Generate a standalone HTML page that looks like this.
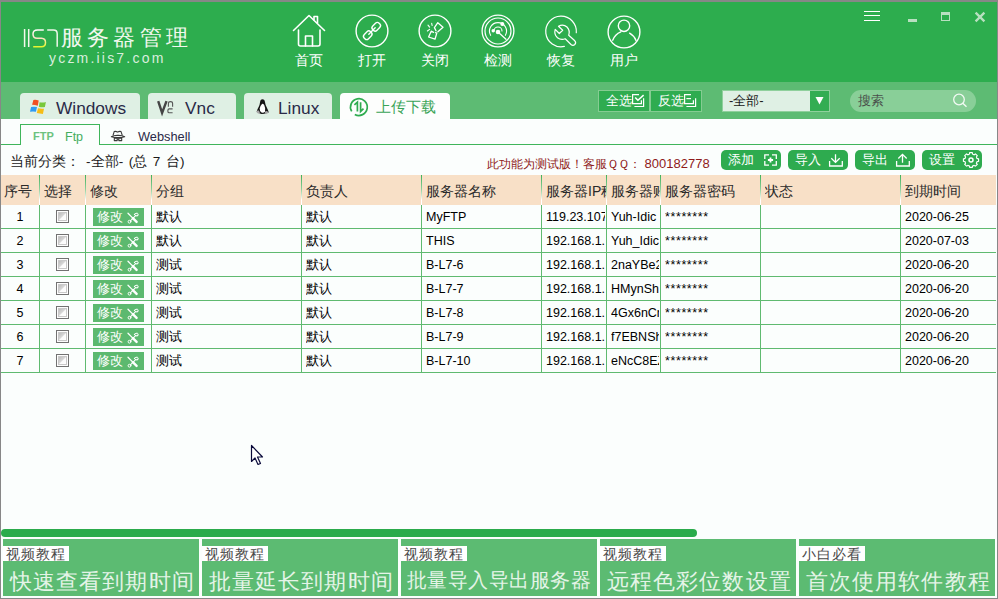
<!DOCTYPE html>
<html><head><meta charset="utf-8">
<style>
*{box-sizing:border-box;margin:0;padding:0}
html,body{width:998px;height:599px;overflow:hidden;background:#fbfefd}
body{position:relative;font-family:"Liberation Sans",sans-serif;color:#222}
.a{position:absolute}
.bd{background:#878787}
#hdr{left:1px;top:2px;width:996px;height:80px;background:#2dad4e}
#band{left:1px;top:82px;width:996px;height:37px;background:#5dbb73}
.nav{position:absolute;top:52px;width:40px;text-align:center;color:#fff;font-size:14px;line-height:16px}
.tab{position:absolute;top:93px;height:26px;background:#dff0e4;border-radius:4px 4px 0 0}
.tab span{position:absolute;top:4px;font-size:17.3px;line-height:22px;color:#2a2a48}
.tb{position:absolute;top:90px;height:22px;border:1px solid #85cc92;background:#2fac50;color:#fff;font-size:13px;line-height:20px}
.btn{position:absolute;top:150px;width:60px;height:20px;border-radius:5px;background:#2eab4f;color:#fff;font-size:13px;line-height:20px}
.btn span{position:absolute;left:7px;top:0}
.btn svg{position:absolute;left:43px;top:4px}
#thead{left:1px;top:175px;width:995px;height:30px;background:#f8e0c7}
.vl{position:absolute;top:175px;width:1px;height:197px;background:linear-gradient(#3fb05a 0px,#8ccf9a 14px,#ffffff 25px,#ffffff 30px,#5fba70 30px)}
.hl{position:absolute;left:1px;width:995px;height:1px;background:#5fba70}
.th{position:absolute;top:183px;font-size:14px;line-height:16px;color:#2a2a2a;white-space:nowrap;overflow:hidden}
.td{position:absolute;font-size:12.5px;line-height:16px;color:#000;white-space:nowrap;overflow:hidden}
.cb{position:absolute;left:56px;width:13px;height:13px;border:1px solid #727272;background:#fdfdfd}
.cb i{position:absolute;left:1px;top:1px;width:9px;height:9px;border:1px solid #c9c9c9;background:linear-gradient(135deg,#bdbdbd 0%,#d8d8d8 48%,#fafafa 52%,#fff 100%)}
.mb{position:absolute;left:93px;width:51px;height:18px;background:#5cb96f;color:#fff;font-size:13px;line-height:18px}
.mb span{position:absolute;left:4px;top:0}
.mb svg{position:absolute;left:34px;top:4px}
.pn{position:absolute;top:539px;width:196px;height:57px;background:#5cbb72}
.pn .lb{position:absolute;left:0;top:7px;width:66px;height:15px;background:#fff;color:#4a4a4a;font-size:14px;line-height:16px;padding-left:3px;letter-spacing:1px;white-space:nowrap}
.pn .bt{position:absolute;left:7px;top:30px;color:#e4f4e7;font-size:22px;line-height:26px;letter-spacing:1.1px;white-space:nowrap}
</style></head>
<body>
<!-- borders -->
<div class="a bd" style="left:0;top:0;width:998px;height:2px"></div>
<div class="a bd" style="left:0;top:0;width:1px;height:599px"></div>
<div class="a bd" style="left:997px;top:0;width:1px;height:599px"></div>
<div class="a bd" style="left:0;top:598px;width:998px;height:1px"></div>

<div id="hdr" class="a"></div>
<div id="band" class="a"></div>

<!-- logo -->
<svg class="a" style="left:0;top:0" width="200" height="82" viewBox="0 0 200 82">
 <defs><linearGradient id="sg" x1="0" y1="29" x2="0" y2="48" gradientUnits="userSpaceOnUse">
  <stop offset="0" stop-color="#ffffff"/><stop offset="0.45" stop-color="#fde3cf"/><stop offset="0.7" stop-color="#f2f27a"/><stop offset="1" stop-color="#e4f51c"/></linearGradient></defs>
 <g fill="none" stroke-width="1.5" stroke-linecap="butt">
  <path d="M24.6 29V47M28.7 29V47" stroke="#f4f8ec"/>
  <path d="M43.8 30H37.5Q33 30 33 34Q33 38.3 37 38.3H41.5Q45.5 38.5 45.5 42.5Q45.5 46.8 41.5 46.8H33.2" stroke="url(#sg)"/>
  <path d="M47.2 30H53.5Q57.2 30 57.2 33.7V46.8" stroke="#eef6ea"/>
 </g>
</svg>
<div class="a" style="left:61px;top:24px;font-size:22px;line-height:28px;letter-spacing:4.2px;color:#f2f8ee;font-weight:300;white-space:nowrap">服务器管理</div>
<div class="a" style="left:49px;top:49px;font-size:14px;line-height:18px;letter-spacing:2.2px;color:#d9eedd;white-space:nowrap">yczm.iis7.com</div>

<!-- nav icons -->
<svg class="a" style="left:0;top:0" width="700" height="82" viewBox="0 0 700 82">
 <g fill="none" stroke="#fff" stroke-width="1.6" stroke-linejoin="round" stroke-linecap="round">
  <!-- house -->
  <path d="M293.5 30.5L309 15.5L324.5 30.5"/>
  <path d="M314 20V16.5H317.5V23"/>
  <path d="M298.5 30V44Q298.5 46 300.5 46H318Q320 46 320 44V30"/>
  <path d="M305.5 46V36H312.5V46"/>
  <!-- open link -->
  <circle cx="372" cy="31" r="15.9" stroke-width="1.4"/>
  <g transform="rotate(-45 372 31)">
   <rect x="361.5" y="28" width="9" height="6" rx="2.6" stroke-width="1.4"/>
   <rect x="373.5" y="28" width="9" height="6" rx="2.6" stroke-width="1.4"/>
   <path d="M367.5 31H376.5" stroke-width="1.4"/>
  </g>
  <!-- close -->
  <circle cx="435" cy="31" r="15.9" stroke-width="1.4"/>
  <path d="M436 30.8L434.4 27.6L437.8 22.7L443 27.2L437.9 31.7" stroke-width="1.3"/>
  <path d="M433.6 32.3L431.2 31.2L428.6 37L435 39.2L436.8 33.1L435.6 32.7" stroke-width="1.3"/>
  <path d="M428 25.2L429.6 27.1M431.7 23.4L432.1 25.5M427.4 31L429.6 29.4" stroke-width="1.1"/>
  <!-- radar -->
  <circle cx="498" cy="31" r="15.9" stroke-width="1.3"/>
  <circle cx="498" cy="31" r="13" stroke-width="1.2"/>
  <path d="M490.6 35.3A8.5 8.5 0 1 1 505.4 35.3" stroke-width="1.1"/>
  <path d="M494 31A4 4 0 0 1 502 31" stroke-width="1.1"/>
  <path d="M498 32L506 39.2" stroke-width="1.3"/>
  <circle cx="498" cy="32" r="1.5" fill="#fff"/>
  <circle cx="502.3" cy="24" r="1.2" fill="#fff"/>
  <circle cx="493.2" cy="30.8" r="0.9" fill="#fff"/>
  <!-- wrench -->
  <path d="M576.3 32.7A15.3 15.3 0 1 0 564.4 46.4" stroke-width="1.2"/>
  <path d="M558.5 26.2L562.7 30.3L559.3 33.5L555.2 29.4Q553.8 34.5 557.5 37.8Q561 40.5 565.2 38.8L571 44.5Q573 46.2 574.8 44.5Q576.5 42.6 574.8 40.8L568.7 35.2Q570.3 30.5 567 27Q563.2 23.5 558.5 26.2Z" stroke-width="1.2"/>
  <!-- user -->
  <circle cx="624" cy="32" r="15.9" stroke-width="1.4"/>
  <circle cx="624" cy="25.8" r="5.7" stroke-width="1.4"/>
  <path d="M612.7 40.2A14.7 14.7 0 0 1 620.8 31.8M629.6 33.2A14.7 14.7 0 0 1 636 40.4" stroke-width="1.4"/>
 </g>
</svg>
<div class="nav" style="left:289px">首页</div>
<div class="nav" style="left:352px">打开</div>
<div class="nav" style="left:415px">关闭</div>
<div class="nav" style="left:478px">检测</div>
<div class="nav" style="left:541px">恢复</div>
<div class="nav" style="left:604px">用户</div>

<!-- window controls -->
<div class="a" style="left:864px;top:10.5px;width:16px;height:1.5px;background:#fff"></div>
<div class="a" style="left:864px;top:14.5px;width:16px;height:1.5px;background:#fff"></div>
<div class="a" style="left:864px;top:19.5px;width:16px;height:1.5px;background:#fff"></div>
<div class="a" style="left:908px;top:19px;width:9px;height:3px;background:#b8e0c0"></div>
<div class="a" style="left:941px;top:12px;width:9px;height:9px;border:1px solid #b8e0c0;border-top-width:3px"></div>
<svg class="a" style="left:974px;top:11px" width="12" height="12" viewBox="0 0 12 12"><path d="M1.6 1.6L10.4 10.4M10.4 1.6L1.6 10.4" stroke="#b8e0c0" stroke-width="2.3"/></svg>

<!-- tabs -->
<div class="tab" style="left:20px;width:120px"><span style="left:36px">Windows</span></div>
<div class="tab" style="left:148px;width:88px"><span style="left:37px">Vnc</span></div>
<div class="tab" style="left:244px;width:88px"><span style="left:34px">Linux</span></div>
<div class="tab" style="left:340px;width:110px;background:#fdfefd"><span style="left:36px;top:3px;font-size:15px;color:#3aa457">上传下载</span></div>
<svg class="a" style="left:0;top:90px" width="400" height="30" viewBox="0 90 400 30">
 <path d="M33.4 100Q36 99.5 38.7 100.6L37.8 105.7Q35 104.8 32.1 104.8Z" fill="#f04f23"/>
 <path d="M39.6 102.3Q42.8 103 45.9 102.1L44.9 107Q41.8 107.6 38.9 106.7Z" fill="#78c83a"/>
 <path d="M31.1 107Q34 106.6 37 107L35.9 111.8Q33 111.4 30 111.8Z" fill="#2f9bf2"/>
 <path d="M38 108.3Q41 109 44 108.7L42.9 114Q40 113.8 36.8 113.1Z" fill="#f6bd16"/>
 <path d="M158.2 101.2L162.1 113L166.5 101.2" fill="none" stroke="#454545" stroke-width="2.4"/>
 <path d="M168.4 106.8V103.5Q168.4 101.6 170.5 101.6Q172.6 101.6 172.6 103.5V106.8" fill="none" stroke="#555" stroke-width="1.1"/>
 <path d="M172.6 108.9H169.2Q167.9 108.9 167.9 110.2V111.5Q167.9 112.8 169.2 112.8H172.6" fill="none" stroke="#555" stroke-width="1.1"/>
 <path d="M262.5 99.2Q260.2 99.3 260 102.5Q259.8 105 258.5 107.2Q257.2 109.3 256.8 111.4Q259 113.8 261.5 114Q264.5 114 268.8 112.4Q268 110 266.8 107.5Q265.2 104.5 265 102.3Q264.7 99.2 262.5 99.2Z" fill="#151515"/>
 <path d="M262.2 103.8Q260.4 105.5 259.7 108.6Q259.5 111.5 261.5 112.6Q264 113.2 265 111.2Q265.8 108.2 264.3 105.2Q263.5 103.8 262.2 103.8Z" fill="#fff"/>
 <path d="M256 111.4Q257.5 110 259 110.6L260.2 113.7Q257.8 114.3 256 111.4Z M268.9 112.5Q267.5 110.5 265.6 111L264.5 113.6Q267 114.2 268.9 112.5Z" fill="#a9a9a9"/>
 <path d="M354.8 114.4A8.4 8.4 0 1 0 351.7 111.4" fill="none" stroke="#2fac50" stroke-width="1.7"/>
 <path d="M354.4 104.8L357.4 102.2V111.4M360.6 102.2V111.4L363.5 108.6" fill="none" stroke="#2fac50" stroke-width="1.7"/>
</svg>

<!-- toolbar -->
<div class="tb" style="left:598px;width:52px"><span class="a" style="left:7px;top:0">全选</span></div>
<div class="tb" style="left:650px;width:52px"><span class="a" style="left:7px;top:0">反选</span></div>
<svg class="a" style="left:0;top:0" width="710" height="115" viewBox="0 0 710 115"><g fill="none" stroke="#fff" stroke-width="1.2">
 <path d="M639 94.6H632.6V103.6H641.4V100.2"/><path d="M635.2 97.4L637.9 100.3L643.6 95.1" stroke-width="1.5"/><path d="M634.4 106.5H643.6V98.2"/>
 <path d="M691 94.6H684.6V103.6H693.4V100.2"/><path d="M686.4 98.6H691"/><path d="M686.4 106.5H695.6V98.2"/>
</g></svg>
<div class="a" style="left:722px;top:90px;width:108px;height:22px;background:#dff0e4;border:1px solid #8fd09c"></div>
<div class="a" style="left:729px;top:93px;font-size:13px;line-height:16px;color:#1a1a1a">-全部-</div>
<div class="a" style="left:810px;top:91px;width:19px;height:20px;background:#33ad52"></div>
<svg class="a" style="left:815px;top:96px" width="9" height="9" viewBox="0 0 9 9"><path d="M0.5 1H8.5L4.5 8.5Z" fill="#fff"/></svg>
<div class="a" style="left:850px;top:90px;width:126px;height:22px;border-radius:11px;background:#89cf98"></div>
<div class="a" style="left:858px;top:93px;font-size:13px;line-height:16px;color:#4a4f4b">搜索</div>
<svg class="a" style="left:952px;top:93px" width="16" height="15" viewBox="0 0 16 15"><circle cx="7" cy="6.5" r="5.3" fill="none" stroke="#f2faf3" stroke-width="1.3"/><path d="M10.8 10.3L14.5 13.8" stroke="#f2faf3" stroke-width="1.4"/></svg>

<!-- subtabs -->
<div class="a" style="left:1px;top:144px;width:996px;height:1px;background:#3fb55b"></div>
<div class="a" style="left:20px;top:124px;width:80px;height:21px;border:1px solid #3fb55b;border-bottom:none;background:#fbfefd"></div>
<div class="a" style="left:33px;top:129px;font-size:11px;line-height:14px;font-weight:bold;color:#6cc27f">FTP</div>
<div class="a" style="left:65px;top:130px;font-size:12.5px;line-height:14px;color:#45ad5e">Ftp</div>
<svg class="a" style="left:105px;top:124px" width="30" height="20" viewBox="105 124 30 20"><g fill="none" stroke="#3a3a3a" stroke-width="1.1" stroke-linejoin="round">
 <path d="M113 135.4L114.2 131.6Q115.8 130.9 117.6 132.1Q119.4 130.9 121 131.6L122.3 135.4"/>
 <path d="M111.4 136.8Q113.5 135.2 118 135.3Q122.5 135.2 124.6 136.8Q122 137.7 118 137.7Q114 137.7 111.4 136.8Z" stroke-width="1.2"/>
 <path d="M114.3 138.2H117.2V140.6H114.3ZM118.8 138.2H121.7V140.6H118.8ZM117.2 139H118.8" stroke-width="1.1"/>
</g></svg>
<div class="a" style="left:138px;top:130px;font-size:12.8px;line-height:14px;color:#2a2a48">Webshell</div>

<!-- info row -->
<div class="a" style="left:10px;top:154px;font-size:13.6px;line-height:16px;color:#1a1a1a;white-space:nowrap;letter-spacing:0.1px;word-spacing:1.5px">当前分类：&nbsp;-全部- (总 7 台)</div>
<div class="a" style="left:487px;top:156px;font-size:13px;line-height:16px;color:#8f1a1a;white-space:nowrap"><span style="font-size:12.2px">此功能为测试版！客服ＱＱ：</span> 800182778</div>
<div class="btn" style="left:721px"><span>添加</span></div>
<div class="btn" style="left:788px"><span>导入</span></div>
<div class="btn" style="left:855px"><span>导出</span></div>
<div class="btn" style="left:922px"><span>设置</span></div>
<svg class="a" style="left:700px;top:145px" width="298" height="30" viewBox="700 145 298 30"><g fill="none" stroke="#fff" stroke-width="1.3">
 <path d="M769 154.8H764.8V159M764.8 161V165.1H769M772 154.8H776.3V159M776.3 161V165.1H772"/>
 <path d="M770.5 157.4V162.6M767.9 160H773.1" stroke-width="1.8"/>
 <path d="M829.6 161V166H842.3V161"/><path d="M835.5 154.2V162.2M831.3 158.3L835.5 162.4L839.7 158.3"/>
 <path d="M896.6 161V166H909.3V161"/><path d="M902.5 155V162.7M898.3 158.5L902.5 154.4L906.7 158.5"/>
 <path d="M969.6 153.2H972.4L972.9 155L974.5 155.7L976.1 154.7L978.1 156.6L977.2 158.3L977.8 159.8L979.6 160.3V163L977.8 163.5L977.1 165.1L978.1 166.7L976.1 168.6L974.4 167.7L972.9 168.3L972.4 170H969.6L969.1 168.3L967.5 167.7L965.9 168.6L963.9 166.7L964.8 165.1L964.2 163.5L962.4 163V160.3L964.2 159.8L964.8 158.3L963.9 156.6L965.9 154.7L967.5 155.7L969.1 155Z" transform="translate(971 160) scale(0.88) translate(-971 -161.6)" stroke-width="1.3"/>
 <circle cx="971" cy="160" r="2" stroke-width="1.5"/>
</g></svg>

<!-- table -->
<div id="thead" class="a"></div>
<div class="th" style="left:4px;width:35px">序号</div>
<div class="th" style="left:44px;width:41px">选择</div>
<div class="th" style="left:90px;width:60px">修改</div>
<div class="th" style="left:156px;width:145px">分组</div>
<div class="th" style="left:306px;width:115px">负责人</div>
<div class="th" style="left:426px;width:115px">服务器名称</div>
<div class="th" style="left:546px;width:60px">服务器IP称</div>
<div class="th" style="left:611px;width:49px">服务器账号</div>
<div class="th" style="left:665px;width:95px">服务器密码</div>
<div class="th" style="left:765px;width:135px">状态</div>
<div class="th" style="left:905px;width:91px">到期时间</div>
<div class="vl" style="left:39px"></div>
<div class="vl" style="left:85px"></div>
<div class="vl" style="left:151px"></div>
<div class="vl" style="left:301px"></div>
<div class="vl" style="left:421px"></div>
<div class="vl" style="left:541px"></div>
<div class="vl" style="left:606px"></div>
<div class="vl" style="left:660px"></div>
<div class="vl" style="left:760px"></div>
<div class="vl" style="left:900px"></div>
<div class="hl" style="top:228px"></div>
<div class="td" style="left:1px;width:38px;top:209px;text-align:center">1</div>
<div class="cb" style="top:210px"><i></i></div>
<div class="mb" style="top:208px"><span>修改</span><svg width="14" height="14" viewBox="0 0 14 14"><g fill="none" stroke="#fff" stroke-linecap="round"><path d="M1 1.3L4.8 5.1" stroke-width="1.3"/><path d="M5.8 6.1L9.6 9.9" stroke-width="2.4"/><path d="M8.6 3.6L3.4 8.8" stroke-width="1.1"/><circle cx="2.5" cy="9.7" r="1.4" stroke-width="1"/><path d="M7.4 2.6Q8.4 0.9 10.3 1.4M8.6 3.6Q10.8 4.6 11.1 2.4" stroke-width="1.1"/></g></svg></div>
<div class="td" style="left:156px;width:140px;top:209px">默认</div>
<div class="td" style="left:306px;width:110px;top:209px">默认</div>
<div class="td" style="left:426px;width:110px;top:209px">MyFTP</div>
<div class="td" style="left:546px;width:59px;top:209px">119.23.107.1</div>
<div class="td" style="left:611px;width:48px;top:209px">Yuh-Idic</div>
<div class="td" style="left:665px;width:90px;top:209px;letter-spacing:0.6px">********</div>
<div class="td" style="left:905px;width:90px;top:209px">2020-06-25</div>
<div class="hl" style="top:252px"></div>
<div class="td" style="left:1px;width:38px;top:233px;text-align:center">2</div>
<div class="cb" style="top:234px"><i></i></div>
<div class="mb" style="top:232px"><span>修改</span><svg width="14" height="14" viewBox="0 0 14 14"><g fill="none" stroke="#fff" stroke-linecap="round"><path d="M1 1.3L4.8 5.1" stroke-width="1.3"/><path d="M5.8 6.1L9.6 9.9" stroke-width="2.4"/><path d="M8.6 3.6L3.4 8.8" stroke-width="1.1"/><circle cx="2.5" cy="9.7" r="1.4" stroke-width="1"/><path d="M7.4 2.6Q8.4 0.9 10.3 1.4M8.6 3.6Q10.8 4.6 11.1 2.4" stroke-width="1.1"/></g></svg></div>
<div class="td" style="left:156px;width:140px;top:233px">默认</div>
<div class="td" style="left:306px;width:110px;top:233px">默认</div>
<div class="td" style="left:426px;width:110px;top:233px">THIS</div>
<div class="td" style="left:546px;width:59px;top:233px">192.168.1.1</div>
<div class="td" style="left:611px;width:48px;top:233px">Yuh_Idic</div>
<div class="td" style="left:665px;width:90px;top:233px;letter-spacing:0.6px">********</div>
<div class="td" style="left:905px;width:90px;top:233px">2020-07-03</div>
<div class="hl" style="top:276px"></div>
<div class="td" style="left:1px;width:38px;top:257px;text-align:center">3</div>
<div class="cb" style="top:258px"><i></i></div>
<div class="mb" style="top:256px"><span>修改</span><svg width="14" height="14" viewBox="0 0 14 14"><g fill="none" stroke="#fff" stroke-linecap="round"><path d="M1 1.3L4.8 5.1" stroke-width="1.3"/><path d="M5.8 6.1L9.6 9.9" stroke-width="2.4"/><path d="M8.6 3.6L3.4 8.8" stroke-width="1.1"/><circle cx="2.5" cy="9.7" r="1.4" stroke-width="1"/><path d="M7.4 2.6Q8.4 0.9 10.3 1.4M8.6 3.6Q10.8 4.6 11.1 2.4" stroke-width="1.1"/></g></svg></div>
<div class="td" style="left:156px;width:140px;top:257px">测试</div>
<div class="td" style="left:306px;width:110px;top:257px">默认</div>
<div class="td" style="left:426px;width:110px;top:257px">B-L7-6</div>
<div class="td" style="left:546px;width:59px;top:257px">192.168.1.6</div>
<div class="td" style="left:611px;width:48px;top:257px">2naYBe2x</div>
<div class="td" style="left:665px;width:90px;top:257px;letter-spacing:0.6px">********</div>
<div class="td" style="left:905px;width:90px;top:257px">2020-06-20</div>
<div class="hl" style="top:300px"></div>
<div class="td" style="left:1px;width:38px;top:281px;text-align:center">4</div>
<div class="cb" style="top:282px"><i></i></div>
<div class="mb" style="top:280px"><span>修改</span><svg width="14" height="14" viewBox="0 0 14 14"><g fill="none" stroke="#fff" stroke-linecap="round"><path d="M1 1.3L4.8 5.1" stroke-width="1.3"/><path d="M5.8 6.1L9.6 9.9" stroke-width="2.4"/><path d="M8.6 3.6L3.4 8.8" stroke-width="1.1"/><circle cx="2.5" cy="9.7" r="1.4" stroke-width="1"/><path d="M7.4 2.6Q8.4 0.9 10.3 1.4M8.6 3.6Q10.8 4.6 11.1 2.4" stroke-width="1.1"/></g></svg></div>
<div class="td" style="left:156px;width:140px;top:281px">测试</div>
<div class="td" style="left:306px;width:110px;top:281px">默认</div>
<div class="td" style="left:426px;width:110px;top:281px">B-L7-7</div>
<div class="td" style="left:546px;width:59px;top:281px">192.168.1.7</div>
<div class="td" style="left:611px;width:48px;top:281px">HMynShx</div>
<div class="td" style="left:665px;width:90px;top:281px;letter-spacing:0.6px">********</div>
<div class="td" style="left:905px;width:90px;top:281px">2020-06-20</div>
<div class="hl" style="top:324px"></div>
<div class="td" style="left:1px;width:38px;top:305px;text-align:center">5</div>
<div class="cb" style="top:306px"><i></i></div>
<div class="mb" style="top:304px"><span>修改</span><svg width="14" height="14" viewBox="0 0 14 14"><g fill="none" stroke="#fff" stroke-linecap="round"><path d="M1 1.3L4.8 5.1" stroke-width="1.3"/><path d="M5.8 6.1L9.6 9.9" stroke-width="2.4"/><path d="M8.6 3.6L3.4 8.8" stroke-width="1.1"/><circle cx="2.5" cy="9.7" r="1.4" stroke-width="1"/><path d="M7.4 2.6Q8.4 0.9 10.3 1.4M8.6 3.6Q10.8 4.6 11.1 2.4" stroke-width="1.1"/></g></svg></div>
<div class="td" style="left:156px;width:140px;top:305px">测试</div>
<div class="td" style="left:306px;width:110px;top:305px">默认</div>
<div class="td" style="left:426px;width:110px;top:305px">B-L7-8</div>
<div class="td" style="left:546px;width:59px;top:305px">192.168.1.8</div>
<div class="td" style="left:611px;width:48px;top:305px">4Gx6nCrx</div>
<div class="td" style="left:665px;width:90px;top:305px;letter-spacing:0.6px">********</div>
<div class="td" style="left:905px;width:90px;top:305px">2020-06-20</div>
<div class="hl" style="top:348px"></div>
<div class="td" style="left:1px;width:38px;top:329px;text-align:center">6</div>
<div class="cb" style="top:330px"><i></i></div>
<div class="mb" style="top:328px"><span>修改</span><svg width="14" height="14" viewBox="0 0 14 14"><g fill="none" stroke="#fff" stroke-linecap="round"><path d="M1 1.3L4.8 5.1" stroke-width="1.3"/><path d="M5.8 6.1L9.6 9.9" stroke-width="2.4"/><path d="M8.6 3.6L3.4 8.8" stroke-width="1.1"/><circle cx="2.5" cy="9.7" r="1.4" stroke-width="1"/><path d="M7.4 2.6Q8.4 0.9 10.3 1.4M8.6 3.6Q10.8 4.6 11.1 2.4" stroke-width="1.1"/></g></svg></div>
<div class="td" style="left:156px;width:140px;top:329px">测试</div>
<div class="td" style="left:306px;width:110px;top:329px">默认</div>
<div class="td" style="left:426px;width:110px;top:329px">B-L7-9</div>
<div class="td" style="left:546px;width:59px;top:329px">192.168.1.9</div>
<div class="td" style="left:611px;width:48px;top:329px">f7EBNShx</div>
<div class="td" style="left:665px;width:90px;top:329px;letter-spacing:0.6px">********</div>
<div class="td" style="left:905px;width:90px;top:329px">2020-06-20</div>
<div class="hl" style="top:372px"></div>
<div class="td" style="left:1px;width:38px;top:353px;text-align:center">7</div>
<div class="cb" style="top:354px"><i></i></div>
<div class="mb" style="top:352px"><span>修改</span><svg width="14" height="14" viewBox="0 0 14 14"><g fill="none" stroke="#fff" stroke-linecap="round"><path d="M1 1.3L4.8 5.1" stroke-width="1.3"/><path d="M5.8 6.1L9.6 9.9" stroke-width="2.4"/><path d="M8.6 3.6L3.4 8.8" stroke-width="1.1"/><circle cx="2.5" cy="9.7" r="1.4" stroke-width="1"/><path d="M7.4 2.6Q8.4 0.9 10.3 1.4M8.6 3.6Q10.8 4.6 11.1 2.4" stroke-width="1.1"/></g></svg></div>
<div class="td" style="left:156px;width:140px;top:353px">测试</div>
<div class="td" style="left:306px;width:110px;top:353px">默认</div>
<div class="td" style="left:426px;width:110px;top:353px">B-L7-10</div>
<div class="td" style="left:546px;width:59px;top:353px">192.168.1.10</div>
<div class="td" style="left:611px;width:48px;top:353px">eNcC8EZx</div>
<div class="td" style="left:665px;width:90px;top:353px;letter-spacing:0.6px">********</div>
<div class="td" style="left:905px;width:90px;top:353px">2020-06-20</div>

<!-- scrollbar -->
<div class="a" style="left:1px;top:529px;width:696px;height:8px;border-radius:4px;background:#2aab4b"></div>
<!-- bottom panels -->
<div class="pn" style="left:3px"><div class="lb">视频教程</div><div class="bt">快速查看到期时间</div></div>
<div class="pn" style="left:202px"><div class="lb">视频教程</div><div class="bt">批量延长到期时间</div></div>
<div class="pn" style="left:401px"><div class="lb">视频教程</div><div class="bt" style="font-size:20px;letter-spacing:0.45px;left:6px;top:28px">批量导入导出服务器</div></div>
<div class="pn" style="left:600px"><div class="lb">视频教程</div><div class="bt">远程色彩位数设置</div></div>
<div class="pn" style="left:799px"><div class="lb">小白必看</div><div class="bt">首次使用软件教程</div></div>
<!-- cursor -->
<svg class="a" style="left:250px;top:444px" width="16" height="22" viewBox="0 0 16 22"><path d="M1.5 1.5V17.5L5 14L8 20.5L10.5 19.5L7.5 13H12.5Z" fill="#fff" stroke="#0a0a3a" stroke-width="1.2" stroke-linejoin="round"/></svg>
</body></html>
